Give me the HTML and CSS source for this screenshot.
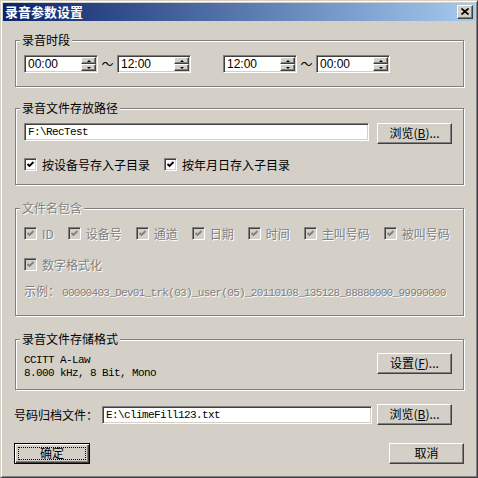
FILE: index.html
```html
<!DOCTYPE html>
<html lang="zh-CN">
<head>
  <meta charset="UTF-8">
  <title>录音参数设置</title>
  <link rel="stylesheet" href="styles.css">
</head>
<body>
  <div class="window">
    <div class="titlebar">
      <span class="title">录音参数设置</span>
      <span class="close-btn">
        <svg width="8" height="7" viewBox="0 0 8 7"><path d="M0.5 0.5 L7.5 6.5 M7.5 0.5 L0.5 6.5" stroke="#000" stroke-width="1.7" fill="none"/></svg>
      </span>
    </div>

    <div class="client">
      <fieldset class="group group-time">
        <legend>录音时段</legend>
        <div class="time-row">
          <div class="time-pair">
            <div class="spin"><span class="spin-text">00:00</span><span class="spin-btns"><i class="up"></i><i class="down"></i></span></div>
            <span class="tilde">～</span>
            <div class="spin"><span class="spin-text">12:00</span><span class="spin-btns"><i class="up"></i><i class="down"></i></span></div>
          </div>
          <div class="time-pair">
            <div class="spin"><span class="spin-text">12:00</span><span class="spin-btns"><i class="up"></i><i class="down"></i></span></div>
            <span class="tilde">～</span>
            <div class="spin"><span class="spin-text">00:00</span><span class="spin-btns"><i class="up"></i><i class="down"></i></span></div>
          </div>
        </div>
      </fieldset>

      <fieldset class="group group-path">
        <legend>录音文件存放路径</legend>
        <div class="path-row">
          <div class="edit">F:\RecTest</div>
          <div class="btn">浏览(<u>B</u>)...</div>
        </div>
        <div class="check-row">
          <label class="check"><span class="box"><svg width="9" height="9" viewBox="0 0 9 9"><polyline points="1.5,4 3.5,6 7.5,2" stroke="currentColor" stroke-width="1.8" fill="none"/></svg></span>按设备号存入子目录</label>
          <label class="check"><span class="box"><svg width="9" height="9" viewBox="0 0 9 9"><polyline points="1.5,4 3.5,6 7.5,2" stroke="currentColor" stroke-width="1.8" fill="none"/></svg></span>按年月日存入子目录</label>
        </div>
      </fieldset>

      <fieldset class="group group-name disabled">
        <legend>文件名包含</legend>
        <div class="check-row first">
          <label class="check"><span class="box"><svg width="9" height="9" viewBox="0 0 9 9"><polyline points="1.5,4 3.5,6 7.5,2" stroke="currentColor" stroke-width="1.8" fill="none"/></svg></span>ID</label>
          <label class="check"><span class="box"><svg width="9" height="9" viewBox="0 0 9 9"><polyline points="1.5,4 3.5,6 7.5,2" stroke="currentColor" stroke-width="1.8" fill="none"/></svg></span>设备号</label>
          <label class="check"><span class="box"><svg width="9" height="9" viewBox="0 0 9 9"><polyline points="1.5,4 3.5,6 7.5,2" stroke="currentColor" stroke-width="1.8" fill="none"/></svg></span>通道</label>
          <label class="check"><span class="box"><svg width="9" height="9" viewBox="0 0 9 9"><polyline points="1.5,4 3.5,6 7.5,2" stroke="currentColor" stroke-width="1.8" fill="none"/></svg></span>日期</label>
          <label class="check"><span class="box"><svg width="9" height="9" viewBox="0 0 9 9"><polyline points="1.5,4 3.5,6 7.5,2" stroke="currentColor" stroke-width="1.8" fill="none"/></svg></span>时间</label>
          <label class="check"><span class="box"><svg width="9" height="9" viewBox="0 0 9 9"><polyline points="1.5,4 3.5,6 7.5,2" stroke="currentColor" stroke-width="1.8" fill="none"/></svg></span>主叫号码</label>
          <label class="check"><span class="box"><svg width="9" height="9" viewBox="0 0 9 9"><polyline points="1.5,4 3.5,6 7.5,2" stroke="currentColor" stroke-width="1.8" fill="none"/></svg></span>被叫号码</label>
        </div>
        <div class="check-row second">
          <label class="check"><span class="box"><svg width="9" height="9" viewBox="0 0 9 9"><polyline points="1.5,4 3.5,6 7.5,2" stroke="currentColor" stroke-width="1.8" fill="none"/></svg></span>数字格式化</label>
        </div>
        <div class="example">示例：<span class="mono">00000403_Dev01_trk(03)_user(05)_20110108_135128_88880000_99990000</span></div>
      </fieldset>

      <fieldset class="group group-format">
        <legend>录音文件存储格式</legend>
        <div class="format-row">
          <div class="format-text mono">CCITT A-Law<br>8.000 kHz, 8 Bit, Mono</div>
          <div class="btn">设置(<u>F</u>)...</div>
        </div>
      </fieldset>

      <div class="archive-row">
        <span class="archive-label">号码归档文件：</span>
        <div class="edit archive-edit">E:\climeFill123.txt</div>
        <div class="btn">浏览(<u>B</u>)...</div>
      </div>

      <div class="actions">
        <div class="btn btn-default"><span class="focus">确定</span></div>
        <div class="btn">取消</div>
      </div>
    </div>
  </div>
</body>
</html>
```

FILE: styles.css
```css
* {
  box-sizing: border-box;
}

body {
  margin: 0;
  background: #d4d0c8;
  font-family: "Noto Sans CJK SC", sans-serif;
  font-size: 12px;
  color: #000;
}

.window {
  width: 478px;
  height: 478px;
  border: 1px solid;
  border-color: #d4d0c8 #404040 #404040 #d4d0c8;
  box-shadow: inset 1px 1px #fff, inset -1px -1px #808080;
  padding: 2px;
  background: #d4d0c8;
}

.titlebar {
  height: 18px;
  background: linear-gradient(to right, #0a246a, #a6caf0);
  display: flex;
  align-items: center;
  justify-content: space-between;
  padding: 0 2px;
}

.title {
  color: #fff;
  font-weight: bold;
  font-size: 13px;
  line-height: 18px;
}

.close-btn {
  width: 16px;
  height: 14px;
  background: #d4d0c8;
  border: 1px solid;
  border-color: #fff #404040 #404040 #fff;
  box-shadow: inset -1px -1px #808080;
  display: flex;
  align-items: center;
  justify-content: center;
  padding-bottom: 1px;
}

.close-btn svg {
  display: block;
}

.client {
  padding: 12px 11px 0 12px;
}

/* group boxes */
.group {
  margin: 0;
  min-width: 0;
  border: 1px solid #808080;
  box-shadow: inset 1px 1px #fff, 1px 1px #fff;
  padding: 8px 11px 13px 8px;
}

.group legend {
  padding: 0 2px;
  margin-left: -4px;
  line-height: 14px;
  background: #d4d0c8;
}

.group-path {
  margin-top: 14px;
}

.group-name {
  margin-top: 16px;
  padding-top: 12px;
  padding-bottom: 15px;
}

.group-format {
  margin-top: 16px;
  padding-top: 7px;
  padding-bottom: 9px;
}

/* time spinners */
.time-row {
  display: flex;
  gap: 32px;
}

.time-pair {
  display: flex;
}

.spin {
  width: 74px;
  height: 18px;
  display: flex;
  background: #fff;
  border: 1px solid;
  border-color: #808080 #fff #fff #808080;
  box-shadow: inset 1px 1px #404040, inset -1px -1px #d4d0c8;
  padding: 1px;
}

.spin-text {
  flex: 1;
  padding-left: 2px;
  font-family: "Liberation Sans", sans-serif;
  font-size: 12px;
  line-height: 14px;
}

.spin-btns {
  width: 15px;
  display: flex;
  flex-direction: column;
}

.spin-btns i {
  flex: 1;
  background: #d4d0c8;
  border: 1px solid;
  border-color: #fff #404040 #404040 #fff;
  box-shadow: inset -1px -1px #808080;
  display: flex;
  align-items: center;
  justify-content: center;
}

.spin-btns i::after {
  content: "";
  width: 0;
  height: 0;
  border-left: 2px solid transparent;
  border-right: 2px solid transparent;
}

.spin-btns .up::after {
  border-bottom: 2px solid #000;
}

.spin-btns .down::after {
  border-top: 2px solid #000;
}

.tilde {
  width: 19px;
  text-align: center;
  line-height: 18px;
}

/* edits and buttons */
.edit {
  height: 18px;
  background: #fff;
  border: 1px solid;
  border-color: #808080 #fff #fff #808080;
  box-shadow: inset 1px 1px #404040, inset -1px -1px #d4d0c8;
  padding: 0 3px;
  font-family: "Liberation Mono", monospace;
  font-size: 11px;
  letter-spacing: -0.6px;
  line-height: 16px;
  white-space: nowrap;
}

.btn {
  width: 75px;
  height: 21px;
  background: #d4d0c8;
  border: 1px solid;
  border-color: #fff #404040 #404040 #fff;
  box-shadow: inset -1px -1px #808080;
  display: flex;
  align-items: center;
  justify-content: center;
  line-height: 14px;
  padding-bottom: 1px;
}

.btn-default {
  width: 76px;
  border-color: #000;
  box-shadow: inset 1px 1px #fff, inset -1px -1px #404040, inset -2px -2px #808080;
}

.btn-default .focus {
  width: 68px;
  height: 13px;
  border: 1px dotted #000;
  display: flex;
  align-items: center;
  justify-content: center;
}

.path-row {
  display: flex;
  align-items: flex-start;
  gap: 8px;
}

.path-row .edit {
  flex: 1;
}

/* checkboxes */
.check-row {
  display: flex;
  gap: 14px;
  margin-top: 14px;
}

.check {
  display: flex;
  align-items: center;
  gap: 5px;
  line-height: 13px;
  white-space: nowrap;
}

.box {
  width: 13px;
  height: 13px;
  background: #fff;
  border: 1px solid;
  border-color: #808080 #fff #fff #808080;
  box-shadow: inset 1px 1px #404040, inset -1px -1px #d4d0c8;
  display: flex;
  align-items: center;
  justify-content: center;
  color: #000;
}

.box svg {
  display: block;
}

.disabled {
  color: #808080;
}

.disabled legend,
.disabled .check,
.disabled .example {
  text-shadow: 1px 1px #fff;
}

.disabled .box {
  background: #d4d0c8;
  color: #808080;
}

.group-name .check-row.first {
  margin-top: 0;
}

.group-name .check-row.second {
  margin-top: 18px;
}

.example {
  margin-top: 13px;
  line-height: 14px;
  white-space: nowrap;
}

.mono {
  font-family: "Liberation Mono", monospace;
}

.example .mono {
  font-size: 11px;
  letter-spacing: -0.7px;
  margin-left: 2px;
}

/* storage format */
.format-row {
  display: flex;
  justify-content: space-between;
  align-items: flex-start;
}

.format-text {
  margin-top: 1px;
  font-size: 11px;
  letter-spacing: -0.6px;
  line-height: 13px;
}

/* bottom rows */
.archive-row {
  display: flex;
  align-items: center;
  margin: 14px 12px 0 -1px;
}

.archive-label {
  width: 84px;
  line-height: 14px;
}

.archive-edit {
  width: 270px;
  margin-left: 4px;
}

.archive-row .btn {
  margin-left: auto;
}

.actions {
  display: flex;
  justify-content: space-between;
  margin: 18px 0 0 -1px;
}
```
